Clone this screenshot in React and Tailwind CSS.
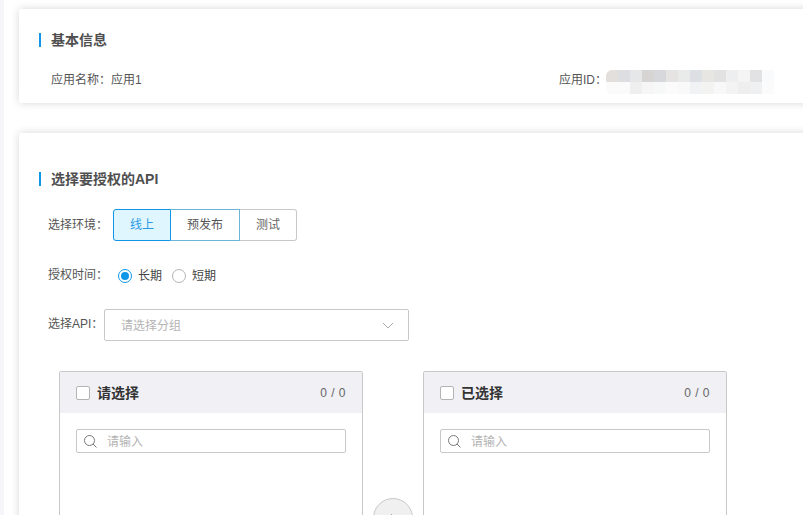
import React from "react";

const font = {
  fontFamily: '"Liberation Sans", "Noto Sans CJK SC", sans-serif',
};

const colon = "\uFF1A";

const topBlocks = ["#e3dfdc", "#dcdee1", "#e6e7e8", "#d6d5d4", "#d7d8db", "#e5e4e2", "#e9eaea", "#dcdfe3", "#e7e6e3", "#e2e2e2", "#eceeef", "#f4f4f5", "#e2e1e3", "#f8fafc"];
const bottomBlocks = ["#fafafa", "#fbfbfb", "#efeff0", "#f6f6f6", "#f7f8f8", "#fafbfa", "#f9f9fa", "#f1f2f3", "#f3f3f1", "#f8f8f8", "#f3f3f4", "#eeeeef", "#eff0f2", "#fbfbfb"];

const SectionTitle = ({ children }) => (
  <div className="flex items-center h-[14px] border-l-[2px] border-[#0f96e6] pl-[10px] text-[14px] font-bold text-[#4f4f4f] leading-[14px]">
    {children}
  </div>
);

const Card = ({ className, children }) => (
  <div className={`bg-white rounded-[2px] shadow-[0_0_8px_rgba(0,0,0,0.16)] ${className}`}>
    {children}
  </div>
);

const SearchIcon = () => (
  <svg width="13" height="13" viewBox="0 0 13 13" fill="none" stroke="#777" strokeWidth="1">
    <circle cx="5.5" cy="5.5" r="5" />
    <path d="M9 9 L12.5 12.5" />
  </svg>
);

const TransferPanel = ({ title }) => (
  <div className="w-[304px] h-[300px] shrink-0 border border-[#c8c8c8] rounded-[2px] bg-white">
    <div className="h-[41px] bg-[#f0f0f5] flex items-center pl-[16px] pr-[16px]">
      <span className="w-[14px] h-[14px] bg-white border border-[#b4b4b4] rounded-[2px]"></span>
      <span className="ml-[7px] mt-[1px] text-[14px] font-bold text-[#333]">{title}</span>
      <span className="ml-auto text-[12px] tracking-[0.5px] text-[#666]">0 / 0</span>
    </div>
    <div className="px-[16px] pt-[16px]">
      <div className="h-[24px] border border-[#c8c8c8] rounded-[2px] flex items-center pl-[7px]">
        <SearchIcon />
        <span className="ml-[10px] mt-[1px] text-[12px] text-[#b4b4b4]">请输入</span>
      </div>
    </div>
  </div>
);

const EnvButton = ({ className, children }) => (
  <div className={`h-full flex items-center justify-center text-[12px] ${className}`}>
    {children}
  </div>
);

const App = () => {
  return (
    <div className="w-[803px] h-[515px] overflow-hidden flex bg-white" style={font}>
      <div className="w-[4px] shrink-0 bg-[#f5f5fa]"></div>

      <div className="flex-1 pl-[15px] pt-[9px]">
        <Card className="h-[94px] mr-[-10px] pl-[20px] pt-[24px]">
          <SectionTitle>基本信息</SectionTitle>
          <div className="flex mt-[24px] pl-[12px] text-[12px] leading-[18px] text-[#555]">
            <span className="w-[508px]">应用名称{colon}应用1</span>
            <span className="w-[47px] whitespace-nowrap">应用ID{colon}</span>
            <div className="-mt-[1px] blur-[0.5px] rounded-l-[6px] overflow-hidden">
              <div className="flex h-[12px]">
                {topBlocks.map((c, i) => (
                  <span key={i} className="w-[12px]" style={{ background: c }}></span>
                ))}
              </div>
              <div className="flex h-[12px]">
                {bottomBlocks.map((c, i) => (
                  <span key={i} className="w-[12px]" style={{ background: c }}></span>
                ))}
              </div>
            </div>
          </div>
        </Card>

        <Card className="h-[500px] mt-[30px] mr-[-10px] pl-[20px] pt-[39px]">
          <SectionTitle>选择要授权的API</SectionTitle>

          <div className="flex items-center mt-[23px] pl-[9px] text-[12px] text-[#555]">
            <span className="w-[65px] -mt-[1px]">选择环境{colon}</span>
            <div className="flex h-[32px] w-[184px]">
              <EnvButton className="w-[58px] bg-[#dff6ff] border border-[#0f96e6] rounded-l-[3px] text-[#2a9ae6]">线上</EnvButton>
              <EnvButton className="w-[69px] border-y border-r border-y-[#6db5d8] border-r-[#6db5d8] text-[#555]">预发布</EnvButton>
              <EnvButton className="w-[57px] border-y border-r border-[#c8c8c8] rounded-r-[3px] text-[#666]">测试</EnvButton>
            </div>
          </div>

          <div className="flex items-center mt-[25px] pl-[9px] h-[20px] text-[12px] text-[#555]">
            <span className="w-[70px] -mt-[3px]">授权时间{colon}</span>
            <span className="w-[14px] h-[14px] rounded-full border border-[#0f96e6] flex items-center justify-center">
              <span className="w-[8px] h-[8px] rounded-full bg-[#0f96e6]"></span>
            </span>
            <span className="ml-[6px] text-[#444]">长期</span>
            <span className="ml-[10px] w-[14px] h-[14px] rounded-full border border-[#b4b4b4]"></span>
            <span className="ml-[6px] text-[#444]">短期</span>
          </div>

          <div className="flex items-center mt-[23px] pl-[9px] text-[12px] text-[#555]">
            <span className="w-[56px] -mt-[2px] whitespace-nowrap">选择API{colon}</span>
            <div className="w-[305px] h-[32px] border border-[#c8c8c8] rounded-[2px] flex items-center pl-[16px] pr-[14px]">
              <span className="text-[#b4b4b4] mt-[1px]">请选择分组</span>
              <svg className="ml-auto" width="12" height="7" viewBox="0 0 12 7" fill="none" stroke="#aaa" strokeWidth="1">
                <path d="M1 1 L6 6 L11 1" />
              </svg>
            </div>
          </div>

          <div className="flex mt-[30px] pl-[20px]">
            <TransferPanel title="请选择" />
            <div className="w-[60px] shrink-0 flex justify-center pt-[127px]">
              <div className="w-[40px] h-[40px] rounded-full bg-[#f0f0f0] border border-[#c8c8c8] flex items-center justify-center">
                <svg width="10" height="10" viewBox="0 0 10 10" fill="none" stroke="#aaa" strokeWidth="1">
                  <path d="M3 1 L7 5 L3 9" />
                </svg>
              </div>
            </div>
            <TransferPanel title="已选择" />
          </div>
        </Card>
      </div>
    </div>
  );
};

export default App;
